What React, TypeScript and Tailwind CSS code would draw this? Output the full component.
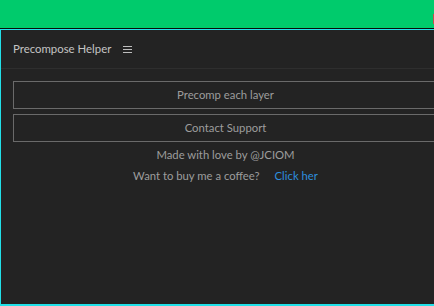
export default function App() {
  return (
    <div className="flex h-[306px] w-[434px] flex-col overflow-hidden bg-[#232323] font-['Lato',sans-serif]">
      <div className="relative h-[28px] shrink-0 bg-[#00cb6c]">
        <div className="absolute right-0 top-[14px] h-[10px] w-[1px] bg-[#c0504d]" />
      </div>
      <div className="h-px shrink-0 bg-[#0b0b0b]" />
      <div className="flex min-h-0 w-[450px] flex-1 flex-col border-b-2 border-l border-t border-b-[#22e0e8] border-l-[#22e0e8] border-t-[#22e0e8]">
        <div className="flex h-[39px] shrink-0 items-center gap-[12px] border-b border-[#2e2e2e] pl-[12px]">
          <span className="text-[11.4px] text-[#c4c4c4]">Precompose Helper</span>
          <HamburgerIcon />
        </div>
        <div className="flex flex-col gap-[5px] px-[12px] pt-[12px]">
          <button className="h-[28px] border border-[#6a6a6a] bg-[#232323] text-[11.3px] text-[#9d9d9d]">
            Precomp each layer
          </button>
          <button className="h-[28px] border border-[#6a6a6a] bg-[#232323] text-[11.3px] text-[#9d9d9d]">
            Contact Support
          </button>
        </div>
        <div className="mt-[2px] flex flex-col items-center text-[11.3px] leading-[21px] text-[#9d9d9d]">
          <p>Made with love by @JCIOM</p>
          <p>
            Want to buy me a coffee?
            <a className="ml-[15px] text-[#2e8ede]">Click her</a>
          </p>
        </div>
      </div>
    </div>
  );
}

function HamburgerIcon() {
  return (
    <svg width="9" height="8" viewBox="0 0 9 8" className="mt-[1px]">
      <rect x="0" y="0" width="9" height="1" fill="#bdbdbd" />
      <rect x="0" y="3" width="9" height="1" fill="#bdbdbd" />
      <rect x="0" y="6" width="9" height="1" fill="#bdbdbd" />
    </svg>
  );
}
